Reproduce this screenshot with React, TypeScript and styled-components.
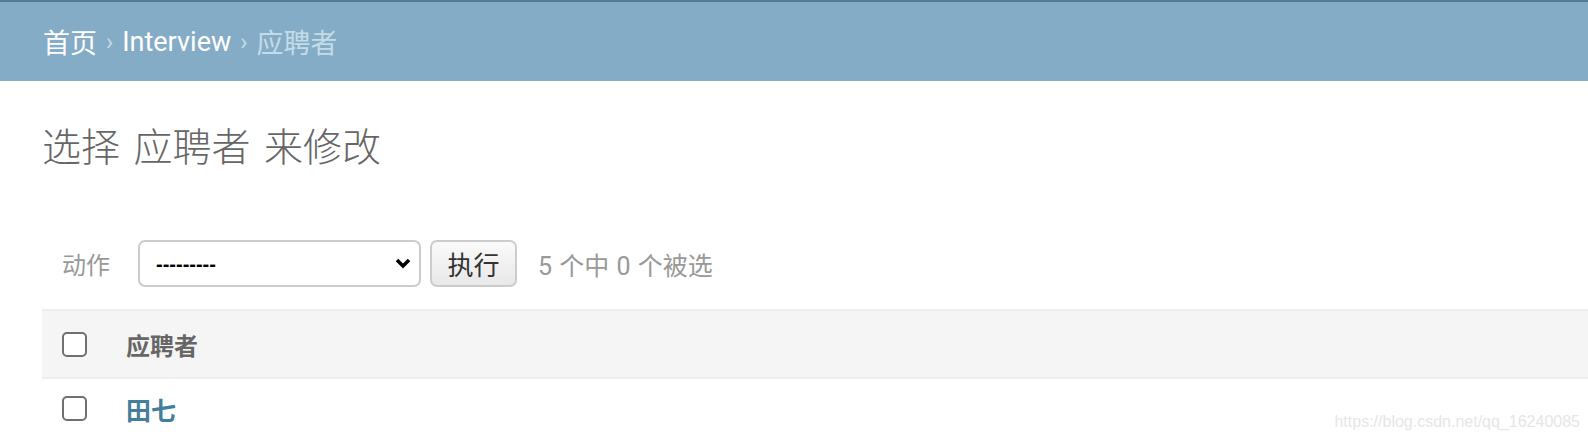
import styled, { createGlobalStyle } from "styled-components";

const GlobalStyle = createGlobalStyle`
  html, body {
    margin: 0;
    padding: 0;
    background: #fff;
  }
  body {
    font-family: Roboto, "Noto Sans CJK SC", "Liberation Sans", sans-serif;
    color: #333;
    overflow: hidden;
  }
`;

const FONT = `Roboto, "Noto Sans CJK SC", sans-serif`;

const Page = styled.div`
  position: relative;
  width: 1588px;
  height: 440px;
  overflow: hidden;
`;

const Breadcrumbs = styled.nav`
  display: flex;
  align-items: center;
  height: 79px;
  border-top: 2px solid #527a95;
  background: #84acc6;
  padding-left: 43px;
  font-size: 27px;
  color: #c4dce8;
`;

const Crumb = styled.a`
  color: #fff;
  text-decoration: none;
`;

const Sep = styled.span`
  color: #c4dce8;
  margin: 0 9px;
  font-size: 24px;
`;

const Current = styled.span`
  color: #c4dce8;
`;

const Content = styled.main`
  padding: 45px 0 0 42px;
`;

const Title = styled.h1`
  margin: 0;
  font-family: ${FONT};
  font-size: 39px;
  line-height: 44px;
  font-weight: 300;
  color: #666;
  word-spacing: 4px;
`;

const Actions = styled.div`
  display: flex;
  align-items: center;
  margin-top: 70px;
  height: 47px;
`;

const Label = styled.label`
  font-size: 24px;
  color: #999;
  margin: 0 28px 0 20px;
`;

const SelectWrap = styled.div`
  position: relative;
  width: 283px;
  height: 47px;
`;

const Select = styled.select`
  appearance: none;
  width: 100%;
  height: 100%;
  box-sizing: border-box;
  border: 2px solid #ccc;
  border-radius: 7px;
  background: #fff;
  padding: 0 40px 0 16px;
  font-family: "Liberation Sans", Arial, sans-serif;
  font-size: 20px;
  font-weight: bold;
  color: #000;
  outline: none;
`;

const Chevron = styled.svg`
  position: absolute;
  right: 10px;
  top: 17px;
  pointer-events: none;
`;

const GoButton = styled.button`
  box-sizing: border-box;
  height: 47px;
  width: 87px;
  margin-left: 9px;
  border: 2px solid #ccc;
  border-radius: 7px;
  background: linear-gradient(#fafafa, #e8e8e8);
  font-family: ${FONT};
  font-size: 26px;
  color: #333;
  padding: 0;
`;

const Counter = styled.span`
  margin-left: 21px;
  font-size: 25px;
  color: #999;
  word-spacing: 1px;
`;

const Table = styled.table`
  width: 100%;
  margin-top: 22px;
  border-collapse: collapse;
`;

const HeadRow = styled.tr`
  background: #f5f5f5;
  border-top: 2px solid #eee;
  border-bottom: 2px solid #eee;
`;

const Cell = styled.td<{ $narrow?: boolean }>`
  padding: 0;
  width: ${({ $narrow }) => ($narrow ? "84px" : "auto")};
  vertical-align: middle;
  text-align: left;
`;

const HeadCell = styled(Cell).attrs({ as: "th" })`
  height: 66px;
  font-size: 24px;
  font-weight: bold;
  color: #666;
`;

const BodyCell = styled(Cell)`
  height: 59px;
`;

const Check = styled.input.attrs({ type: "checkbox" })`
  appearance: none;
  display: block;
  margin: 0 0 0 20px;
  width: 25px;
  height: 25px;
  box-sizing: border-box;
  border: 2px solid #707070;
  border-radius: 5px;
  background: #fff;
`;

const NameLink = styled.a`
  font-size: 25px;
  font-weight: bold;
  color: #447e9b;
  text-decoration: none;
`;

const Watermark = styled.span`
  position: absolute;
  right: 8px;
  bottom: 9px;
  font-family: "Liberation Sans", Arial, sans-serif;
  font-size: 16px;
  color: #e6e6e6;
`;

export default function App() {
  return (
    <Page>
      <GlobalStyle />
      <Breadcrumbs>
        <Crumb href="#">首页</Crumb>
        <Sep>›</Sep>
        <Crumb href="#">Interview</Crumb>
        <Sep>›</Sep>
        <Current>应聘者</Current>
      </Breadcrumbs>
      <Content>
        <Title>选择 应聘者 来修改</Title>
        <Actions>
          <Label>动作</Label>
          <SelectWrap>
            <Select defaultValue="">
              <option value="">---------</option>
            </Select>
            <Chevron width="16" height="12" viewBox="0 0 16 12">
              <path d="M2 3 L8 9 L14 3" fill="none" stroke="#000" strokeWidth="3.5" />
            </Chevron>
          </SelectWrap>
          <GoButton>执行</GoButton>
          <Counter>5 个中 0 个被选</Counter>
        </Actions>
        <Table>
          <thead>
            <HeadRow>
              <HeadCell $narrow>
                <Check />
              </HeadCell>
              <HeadCell>应聘者</HeadCell>
            </HeadRow>
          </thead>
          <tbody>
            <tr>
              <BodyCell $narrow>
                <Check />
              </BodyCell>
              <BodyCell>
                <NameLink href="#">田七</NameLink>
              </BodyCell>
            </tr>
          </tbody>
        </Table>
      </Content>
      <Watermark>https://blog.csdn.net/qq_16240085</Watermark>
    </Page>
  );
}
